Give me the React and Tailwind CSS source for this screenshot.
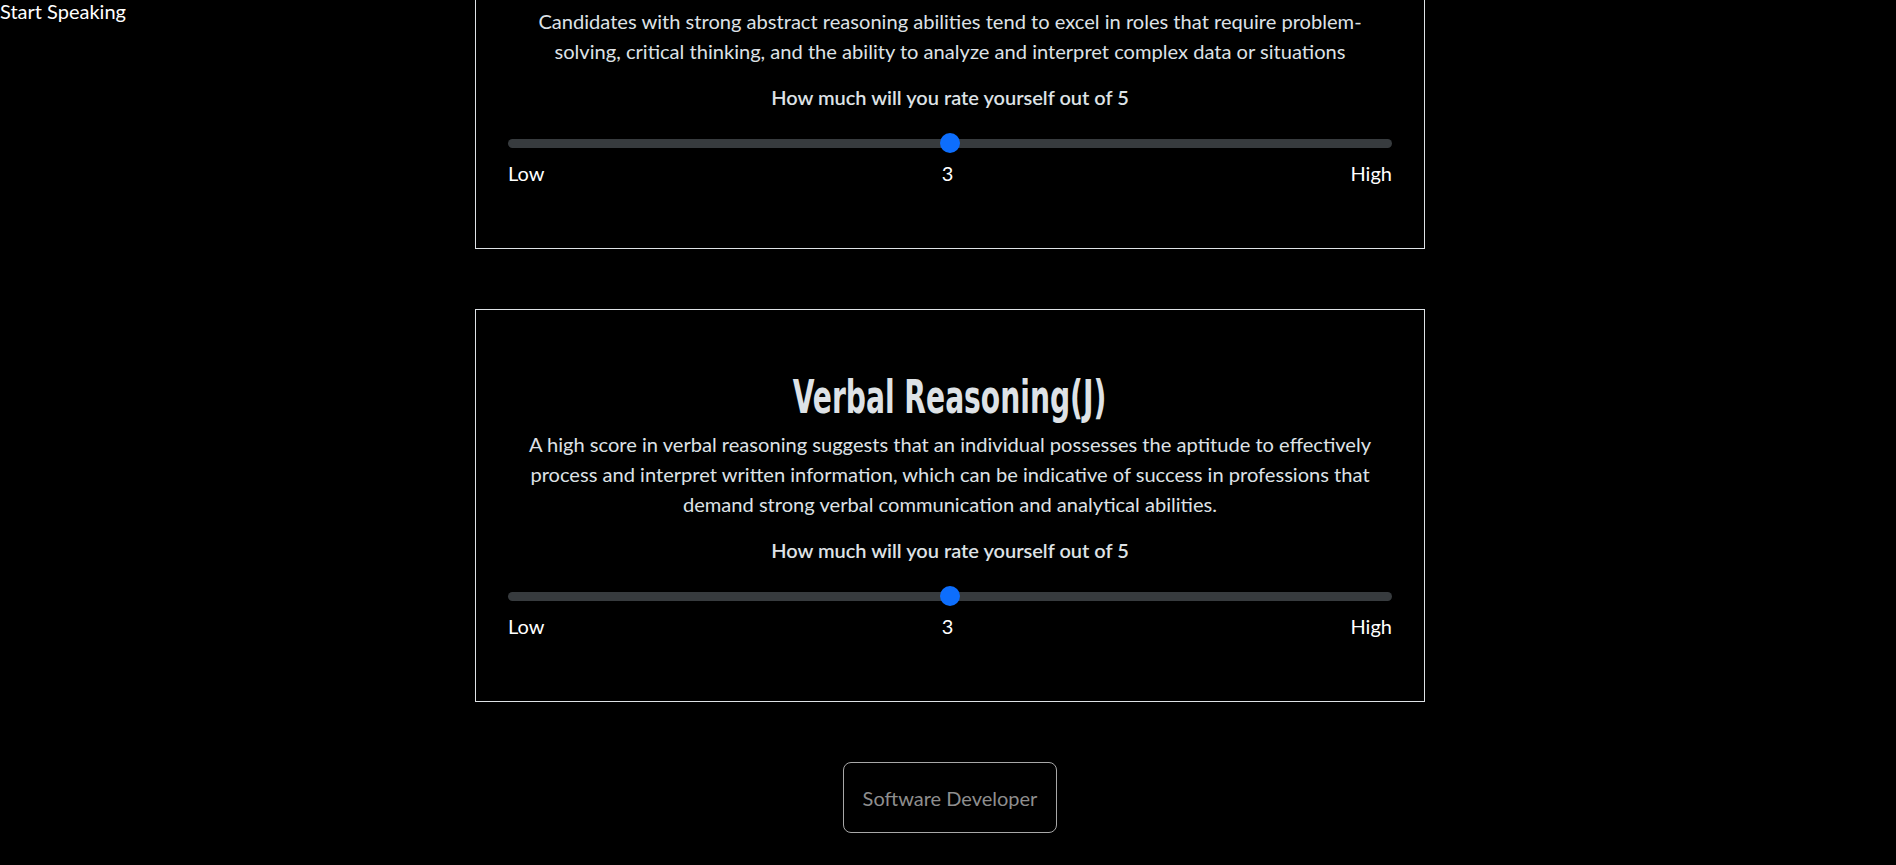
import React from 'react';

const cards = [
    {
        title: 'Abstract Reasoning(I)',
        text: 'Candidates with strong abstract reasoning abilities tend to excel in roles that require problem-solving, critical thinking, and the ability to analyze and interpret complex data or situations',
        value: 3,
    },
    {
        title: 'Verbal Reasoning(J)',
        text: 'A high score in verbal reasoning suggests that an individual possesses the aptitude to effectively process and interpret written information, which can be indicative of success in professions that demand strong verbal communication and analytical abilities.',
        value: 3,
    },
];

const RatingSlider = ({ value }) => {
    const pct = ((value - 1) / 4) * 100;
    return (
        <div className="mt-[21px]">
            <div className="relative h-5 flex items-center">
                <div className="w-full h-[9px] rounded-full bg-[#373b3e]" />
                <div
                    className="absolute top-0 w-5 h-5 rounded-full bg-[#0d6efd] -translate-x-1/2"
                    style={{ left: `${pct}%` }}
                />
            </div>
            <div className="mt-[5px] flex justify-between text-white">
                <span>Low</span>
                <span>{value}</span>
                <span>High</span>
            </div>
        </div>
    );
};

const TraitCard = ({ title, text, value }) => (
    <div className="border border-[#dee2e6] px-8 pt-[63px] pb-[60px] text-center">
        <h1 className="h-12 mb-2 flex justify-center items-center">
            <span
                className="inline-block text-[46px] leading-[48px] font-bold text-[#dee2e6] scale-x-[0.68] whitespace-nowrap"
                style={{ fontFamily: '"DejaVu Sans Condensed", "DejaVu Sans", sans-serif' }}
            >
                {title}
            </span>
        </h1>
        <p className="text-[#dee2e6] text-[20.1px]">{text}</p>
        <p className="mt-[16px] font-semibold text-[#dee2e6]">How much will you rate yourself out of 5</p>
        <RatingSlider value={value} />
    </div>
);

const App = () => {
    return (
        <div className="relative h-[865px] overflow-hidden bg-black text-[20px] leading-[30px]" style={{ fontFamily: 'Lato, "Noto Sans", sans-serif' }}>
            <div className="absolute top-0 left-0 text-white leading-[22px]">Start Speaking</div>
            <div className="pl-1">
                <div className="w-[950px] mx-auto -mt-[114px] flex flex-col items-center gap-[60px]">
                    {cards.map((card) => (
                        <div key={card.title} className="w-full">
                            <TraitCard {...card} />
                        </div>
                    ))}
                    <button className="w-[214px] h-[71px] border border-[#a8a8a8] rounded-lg text-[#8e8e8e]">
                        Software Developer
                    </button>
                </div>
            </div>
        </div>
    );
};

export default App;
